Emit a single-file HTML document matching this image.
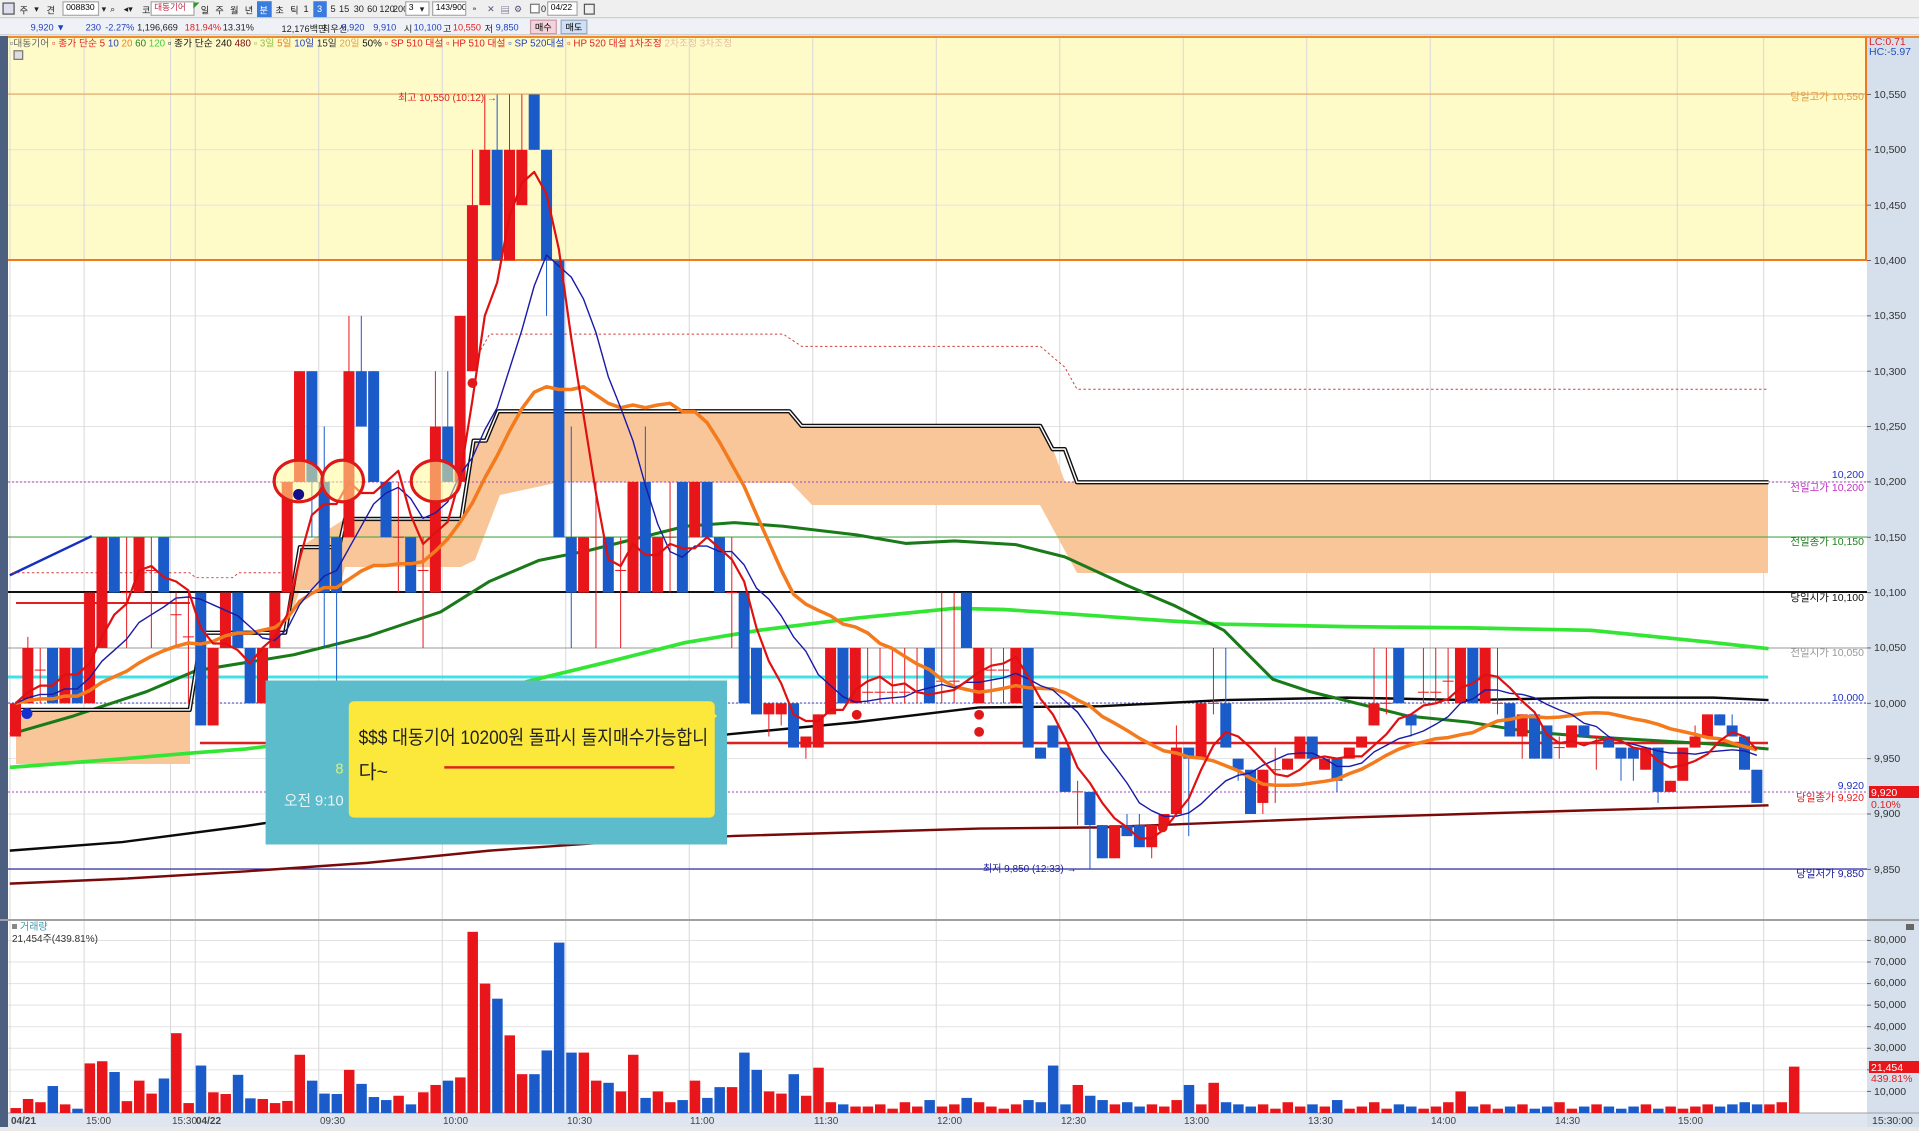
<!DOCTYPE html>
<html><head><meta charset="utf-8">
<style>
*{margin:0;padding:0;box-sizing:border-box}
body{width:1919px;height:1131px;overflow:hidden;background:#fff;font-family:"Liberation Sans","Noto Sans CJK KR",sans-serif;position:relative}
#ov{position:absolute;left:0;top:0;width:1568px;height:924px;transform:scale(1.2239);transform-origin:0 0;pointer-events:none}
.a{position:absolute;white-space:nowrap;line-height:1}
.r1{position:absolute;left:0;top:0;width:1568px;height:15px;background:#efefef;border-bottom:1px solid #ccc}
.r2{position:absolute;left:0;top:15px;width:1568px;height:14px;background:#eef2f7;border-bottom:1px solid #c8c8c8}
.bx{position:absolute;background:#fff;border:1px solid #a8a8a8;height:12px;top:1px;font-size:7px;line-height:10px;padding-left:2px;white-space:nowrap;overflow:hidden}
.t{position:absolute;top:3px;font-size:7.5px;color:#222;white-space:nowrap}
.t2{position:absolute;top:18px;font-size:7.5px;white-space:nowrap}
svg{position:absolute;left:0;top:0}
</style></head><body>
<svg id="s" width="1919" height="1131" viewBox="0 0 1919 1131">
<rect x="0" y="36" width="1919" height="1095" fill="#fff"/>
<rect x="0" y="36" width="8" height="1095" fill="#4d5f80"/>
<rect x="8" y="37" width="1858" height="223" fill="#fffbc8"/>
<rect x="1867" y="36" width="52" height="1095" fill="#d6e0ec"/>
<g id="grid"></g>
<line x1="8" y1="37" x2="1919" y2="37" stroke="#f08a2a" stroke-width="2"/>
<line x1="8" y1="94" x2="1866" y2="94" stroke="#f0a030" stroke-width="1"/>
<line x1="8" y1="260" x2="1867" y2="260" stroke="#f07820" stroke-width="2"/>
<line x1="1866" y1="37" x2="1866" y2="260" stroke="#f07820" stroke-width="2"/>
<polygon fill="#f9c699" points="16,710 190,710 190,764 16,764"/>
<polygon fill="#f9c699" points="240,631 285,631 300,547 345,519 461,519 473,440 486,440 498,411 790,411 802,426 1040,426 1053,449 1065,482 1768,482 1768,573 1077,573 1040,505 812,505 791,483 560,482 500,495 475,560 461,567 345,567 339,590 300,590 285,633 240,635"/>
<line x1="8" y1="482" x2="1867" y2="482" stroke="#a040c0" stroke-width="1" stroke-dasharray="2,2"/>
<line x1="8" y1="537" x2="1867" y2="537" stroke="#40a040" stroke-width="1"/>
<line x1="8" y1="592" x2="1867" y2="592" stroke="#111" stroke-width="2"/>
<line x1="8" y1="648" x2="1867" y2="648" stroke="#9a9a9a" stroke-width="1"/>
<line x1="8" y1="677" x2="1768" y2="677" stroke="#40e0e8" stroke-width="3"/>
<line x1="8" y1="703" x2="1867" y2="703" stroke="#4040c0" stroke-width="1" stroke-dasharray="2,2"/>
<line x1="16" y1="603" x2="190" y2="603" stroke="#e02020" stroke-width="2"/>
<line x1="200" y1="743" x2="1768" y2="743" stroke="#e02020" stroke-width="2.5"/>
<line x1="8" y1="792" x2="1867" y2="792" stroke="#a040c0" stroke-width="1" stroke-dasharray="2,2"/>
<line x1="8" y1="869" x2="1867" y2="869" stroke="#3030a0" stroke-width="1.2"/>
<line x1="0" y1="920" x2="1919" y2="920" stroke="#a0a0a0" stroke-width="2"/>
<rect x="8" y="1113" width="1859" height="14" fill="#dfe6ef"/>
<line x1="8" y1="1113" x2="1919" y2="1113" stroke="#a0a0a0"/>
<rect x="0" y="1127" width="1919" height="4" fill="#e8e8e8"/>
<g transform="scale(1.2239)" fill="none" stroke-linejoin="round">
<polyline stroke="#0a0a0a" stroke-width="2" points="8,695 100,688 200,675 300,660 400,640 500,618 595,600 700,590 800,578 900,577 1000,572 1100,570 1200,572 1300,570 1400,570 1445,572"/>
<polyline stroke="#7a0a0a" stroke-width="2" points="8,722 100,718 200,712 300,705 400,695 500,688 600,683 700,680 800,677 900,676 1000,672 1100,668 1200,665 1300,662 1445,658"/>
<polyline stroke="#33e633" stroke-width="3" points="8,627 100,620 160,615 200,612 300,600 380,575 430,557 500,540 560,525 620,515 700,505 780,497 820,498 880,502 950,507 1000,510 1100,512 1200,513 1300,515 1350,520 1400,525 1445,530"/>
<polyline stroke="#1a7a1a" stroke-width="2.5" points="8,600 60,585 120,565 160,548 240,535 300,520 360,500 400,475 440,458 480,450 520,440 560,430 600,427 640,430 700,437 740,444 780,442 830,445 870,455 920,478 960,495 1000,515 1040,555 1070,565 1110,575 1150,585 1200,590 1250,598 1300,602 1350,605 1400,608 1445,612"/>
<polyline stroke="#1530c0" stroke-width="2" points="8,470 75,438"/>
<polyline stroke="#d04040" stroke-width="0.8" stroke-dasharray="2,2" points="385,300 400,273 640,273 655,283 850,283 870,300 880,318 1445,318"/>
<polyline stroke="#d04040" stroke-width="0.8" stroke-dasharray="2,2" points="10,468 155,468 160,472 190,472 195,468 230,468"/>
<polyline stroke="#111" stroke-width="3.5" points="13,580 155,580 165,517 233,517 245,447 277,447 282,424 377,424 387,360 397,360 407,336 645,336 655,348 850,348 860,367 870,367 880,394 1445,394"/>
<polyline stroke="#fff" stroke-width="1.2" points="13,580 155,580 165,517 233,517 245,447 277,447 282,424 377,424 387,360 397,360 407,336 645,336 655,348 850,348 860,367 870,367 880,394 1445,394"/>
</g>
<g id="candles"></g>
<g id="ma"></g>
<g id="vol"></g>
<g transform="scale(1.2239)">
<ellipse cx="244" cy="393" rx="20" ry="17" fill="rgba(255,250,150,0.55)" stroke="#e01818" stroke-width="2.5"/>
<ellipse cx="280" cy="393" rx="17" ry="17" fill="rgba(255,250,150,0.55)" stroke="#e01818" stroke-width="2.5"/>
<ellipse cx="356" cy="393" rx="20" ry="17" fill="rgba(255,250,150,0.55)" stroke="#e01818" stroke-width="2.5"/>
<circle cx="244" cy="404" r="4.5" fill="#10108a"/>
<circle cx="22" cy="583" r="4.5" fill="#1530d0"/>
<circle cx="386" cy="313" r="4" fill="#e01818"/>
<circle cx="700" cy="584" r="4" fill="#e01818"/>
<circle cx="800" cy="584" r="4" fill="#e01818"/>
<circle cx="800" cy="598" r="4" fill="#e01818"/>
<circle cx="950" cy="676" r="4" fill="#e01818"/>
</g>
<g font-family="Liberation Sans, Noto Sans CJK KR, sans-serif" font-size="10.5">
<text x="398" y="101" fill="#e02020" font-size="10">최고 10,550 (10:12) →</text>
<text x="983" y="872" fill="#2020a0" font-size="10">최저 9,850 (12:33) →</text>
<g text-anchor="end">
<text x="1864" y="100" fill="#e0a040">당일고가 10,550</text>
<text x="1864" y="478" fill="#2030c0">10,200</text>
<text x="1864" y="491" fill="#c030c0">전일고가 10,200</text>
<text x="1864" y="545" fill="#208020">전일종가 10,150</text>
<text x="1864" y="601" fill="#111">당일시가 10,100</text>
<text x="1864" y="656" fill="#999">전일시가 10,050</text>
<text x="1864" y="701" fill="#2030c0">10,000</text>
<text x="1864" y="789" fill="#2030c0">9,920</text>
<text x="1864" y="801" fill="#e02020">당일종가 9,920</text>
<text x="1864" y="877" fill="#2020a0">당일저가 9,850</text>
</g>
<g fill="#333" font-size="10.5">
<text x="1869" y="45" fill="#e02020">LC:0.71</text>
<text x="1869" y="55" fill="#2050c0">HC:-5.97</text>
<text x="1874" y="98">10,550</text><text x="1874" y="153">10,500</text><text x="1874" y="209">10,450</text><text x="1874" y="264">10,400</text><text x="1874" y="319">10,350</text><text x="1874" y="375">10,300</text><text x="1874" y="430">10,250</text><text x="1874" y="485">10,200</text><text x="1874" y="541">10,150</text><text x="1874" y="596">10,100</text><text x="1874" y="651">10,050</text><text x="1874" y="707">10,000</text><text x="1874" y="762">9,950</text><text x="1874" y="817">9,900</text><text x="1874" y="873">9,850</text>
<rect x="1869" y="786" width="50" height="12" fill="#e8161b"/>
<text x="1871" y="796" fill="#fff">9,920</text>
<text x="1871" y="808" fill="#e02020">0.10%</text>
<text x="1874" y="943">80,000</text><text x="1874" y="965">70,000</text><text x="1874" y="986">60,000</text><text x="1874" y="1008">50,000</text><text x="1874" y="1030">40,000</text><text x="1874" y="1051">30,000</text><text x="1874" y="1095">10,000</text>
<rect x="1869" y="1061" width="50" height="12" fill="#e8161b"/>
<text x="1871" y="1071" fill="#fff">21,454</text>
<text x="1871" y="1082" fill="#e02020">439.81%</text>
<text x="1872" y="1124">15:30:00</text>
</g>
<g font-size="10" fill="#444">
<text x="11" y="1124" font-weight="bold">04/21</text><text x="86" y="1124">15:00</text><text x="172" y="1124">15:30</text><text x="196" y="1124" font-weight="bold">04/22</text><text x="320" y="1124">09:30</text><text x="443" y="1124">10:00</text><text x="567" y="1124">10:30</text><text x="690" y="1124">11:00</text><text x="814" y="1124">11:30</text><text x="937" y="1124">12:00</text><text x="1061" y="1124">12:30</text><text x="1184" y="1124">13:00</text><text x="1308" y="1124">13:30</text><text x="1431" y="1124">14:00</text><text x="1555" y="1124">14:30</text><text x="1678" y="1124">15:00</text>
</g>
<rect x="12" y="924" width="5" height="5" fill="#888"/>
<text x="20" y="930" fill="#3a9ab0" font-size="10">거래량</text>
<text x="12" y="942" fill="#333" font-size="10">21,454주(439.81%)</text>
<rect x="1906" y="924" width="8" height="6" fill="#666"/>
</g>
</svg>
<div id="ov">
<div class="r1"></div>
<div class="r2"></div>
<div class="a" style="left:2px;top:2px;width:10px;height:10px;border:1px solid #555;background:#dde"></div>
<div class="t" style="left:16px">주</div><div class="t" style="left:28px">▾</div>
<div class="t" style="left:38px">견</div>
<div class="bx" style="left:51px;width:30px">008830</div>
<div class="t" style="left:83px">▾</div><div class="t" style="left:90px">⌕</div><div class="t" style="left:101px">◂▾</div>
<div class="t" style="left:116px">코</div>
<div class="bx" style="left:123px;width:36px;color:#c02040">대동기어</div>
<div class="a" style="left:158px;top:2px;width:0;height:0;border-left:5px solid #2a9a2a;border-bottom:5px solid transparent"></div>
<div class="t" style="left:164px">일</div><div class="t" style="left:176px">주</div><div class="t" style="left:188px">월</div><div class="t" style="left:200px">년</div>
<div class="a" style="left:210px;top:1px;width:12px;height:13px;background:#3a7be0"></div><div class="t" style="left:212px;color:#fff">분</div>
<div class="t" style="left:225px">초</div><div class="t" style="left:237px">틱</div>
<div class="t" style="left:248px">1</div>
<div class="a" style="left:256px;top:1px;width:11px;height:13px;background:#3a7be0"></div><div class="t" style="left:259px;color:#fff">3</div>
<div class="t" style="left:270px">5</div><div class="t" style="left:277px">15</div><div class="t" style="left:289px">30</div><div class="t" style="left:300px">60</div><div class="t" style="left:310px">120</div><div class="t" style="left:321px">200</div>
<div class="bx" style="left:331px;width:20px">3</div><div class="t" style="left:343px">▾</div>
<div class="bx" style="left:353px;width:28px">143/900</div>
<div class="t" style="left:386px;color:#557">⁍</div><div class="t" style="left:398px;color:#557">✕</div><div class="t" style="left:409px;color:#557">▤</div><div class="t" style="left:420px;color:#557">⚙</div>
<div class="a" style="left:433px;top:3px;width:8px;height:8px;border:1px solid #777;background:#fff"></div><div class="t" style="left:442px">0</div>
<div class="bx" style="left:447px;width:25px">04/22</div>
<div class="a" style="left:477px;top:3px;width:9px;height:9px;border:1px solid #555"></div>
<div class="t2" style="left:25px;color:#2040c0">9,920 ▼</div>
<div class="t2" style="left:70px;color:#2040c0">230</div><div class="t2" style="left:86px;color:#2040c0">-2.27%</div>
<div class="t2" style="left:112px;color:#222">1,196,669</div>
<div class="t2" style="left:151px;color:#e02020">181.94%</div><div class="t2" style="left:182px;color:#222">13.31%</div>
<div class="t2" style="left:230px;color:#222">12,176백만</div><div class="t2" style="left:263px;color:#222">최우선</div>
<div class="t2" style="left:279px;color:#2040c0">9,920</div><div class="t2" style="left:305px;color:#2040c0">9,910</div>
<div class="t2" style="left:330px;color:#222">시</div><div class="t2" style="left:338px;color:#2040c0">10,100</div>
<div class="t2" style="left:362px;color:#222">고</div><div class="t2" style="left:370px;color:#e02020">10,550</div>
<div class="t2" style="left:396px;color:#222">저</div><div class="t2" style="left:405px;color:#2040c0">9,850</div>
<div class="a" style="left:433px;top:16px;width:22px;height:12px;background:#f4d4dc;border:1px solid #c9a;font-size:7.5px;padding:2px 0 0 3px">매수</div>
<div class="a" style="left:458px;top:16px;width:22px;height:12px;background:#cfe0f6;border:1px solid #9ab;font-size:7.5px;padding:2px 0 0 3px">매도</div>
<div class="a" style="left:8px;top:32px;font-size:8px;color:#666">▫대동기어 <span style="color:#e02020">▫ 종가 단순 5</span> <span style="color:#2040c0">10</span> <span style="color:#f08020">20</span> <span style="color:#208020">60</span> <span style="color:#40d040">120</span> <span style="color:#111">▫ 종가 단순 240</span> <span style="color:#7a0a0a">480</span> <span style="color:#90c040">▫ 3일</span> <span style="color:#e08020">5일</span> <span style="color:#2040c0">10일</span> <span style="color:#333">15일</span> <span style="color:#e0a040">20일</span> <span style="color:#111">50%</span> <span style="color:#e02020">▫ SP 510 대설 ▫ HP 510 대설</span> <span style="color:#2040c0">▫ SP 520대설</span> <span style="color:#e02020">▫ HP 520 대설 1차조정</span> <span style="color:#e0c0a0">2차조정 3차조정</span></div>
<div class="a" style="left:11px;top:41px;width:8px;height:8px;border:1px solid #777;background:#ddd"></div>
<div class="a" style="left:217px;top:556px;width:377px;height:134px;background:#5cbccb"></div>
<div class="a" style="left:285px;top:573px;width:299px;height:95px;background:#fbe83a;border-radius:4px"></div>
<div class="a" style="left:580px;top:580px;width:0;height:0;border-left:6px solid #fbe83a;border-top:5px solid transparent;border-bottom:5px solid transparent"></div>
<div class="a" style="left:293px;top:596px;font-size:16px;color:#222;transform:scaleX(0.88);transform-origin:0 0">$$$ 대동기어 10200원 돌파시 돌지매수가능합니</div>
<div class="a" style="left:293px;top:624px;font-size:16px;color:#222">다~</div>
<div class="a" style="left:363px;top:626px;width:188px;height:2px;background:#e02020"></div>
<div class="a" style="left:274px;top:622px;font-size:12px;color:#d8f080">8</div>
<div class="a" style="left:232px;top:648px;font-size:12px;color:#e8f4f6">오전 9:10</div>
</div>
<script>
var NS="http://www.w3.org/2000/svg";
function el(p,t,a){var e=document.createElementNS(NS,t);for(var k in a)e.setAttribute(k,a[k]);p.appendChild(e);return e;}
function Y(p){return 703.3-(p-10000)*1.107;}
function X(i){return 10+i*12.35;}
var g=document.getElementById('grid');
for(var p=9850;p<=10550;p+=50){el(g,'line',{x1:8,x2:1867,y1:Y(p),y2:Y(p),stroke:'#e2e2e2','stroke-width':1});el(g,'line',{x1:1867,x2:1871,y1:Y(p),y2:Y(p),stroke:'#666'});}
for(var v=10;v<=80;v+=10){var y=1113-v*2.157;el(g,'line',{x1:8,x2:1867,y1:y,y2:y,stroke:'#e2e2e2'});el(g,'line',{x1:1867,x2:1871,y1:y,y2:y,stroke:'#666'});}
[0,6,13,15,25,35,45,55,65,75,85,95,105,115,125,135,142].forEach(function(i){el(g,'line',{x1:X(i),x2:X(i),y1:37,y2:1127,stroke:'#d8d8d8'});});
var D=[[9970,10000],[10000,10050,10060],[10030,10030,10050,10000],[10050,10000],[10000,10050],[10050,10000],[10000,10100],[10050,10150],[10150,10100],[10100,10100,10150,10050],
[10100,10150],[10120,10120,10150,10050],[10150,10100],[10080,10080,10100,10050],[10060,10060,10100,10000],[10100,9980],[9980,10050],[10050,10100],[10100,10050],[10050,10000],
[10000,10050],[10050,10100],[10100,10200],[10200,10300],[10300,10200,10300,10150],[10200,10100,10250,10050],[10150,10100,10150,10000],[10150,10300,10350],[10300,10250,10350],[10300,10200],
[10200,10150],[10150,10150,10200,10100],[10150,10100],[10120,10120,10150,10050],[10100,10250,10300],[10250,10200,10300],[10200,10350],[10300,10450,10500],[10450,10500,10550],[10500,10400,10550],
[10400,10500,10550],[10450,10500,10550],[10550,10500],[10500,10400,10500,10350],[10400,10150],[10150,10100,10250,10050],[10100,10150],[10150,10150,10200,10050],[10150,10100],[10120,10120,10150,10050],
[10100,10200],[10200,10100,10250],[10100,10150],[10150,10150,10200,10100],[10200,10100],[10150,10200],[10200,10150],[10150,10100],[10100,10100,10150,10050],[10100,10000],
[10050,9990],[9990,10000,10000,9970],[9990,10000,10000,9980],[10000,9960],[9960,9970,9970,9950],[9960,9990],[9990,10050],[10050,10000],[10000,10050],[10010,10010,10050,10000],
[10010,10010,10050,10000],[10010,10010,10050,10000],[10010,10010,10050,10000],[10010,10010,10050,10000],[10050,10000],[10020,10020,10100,10000],[10020,10020,10100,10000],[10100,10050],[10000,10050],[10030,10030,10050,10000],
[10030,10030,10050,10000],[10000,10050],[10050,9960],[9960,9950],[9980,9960],[9960,9920],[9920,9920,9930,9890],[9920,9890,9920,9850],[9890,9860],[9860,9890],
[9890,9880,9900,9880],[9890,9870,9900],[9870,9890,9890,9860],[9890,9900],[9900,9960,9980],[9960,9950,9960,9880],[9950,10000],[10000,10000,10050,9990],[10000,9960,10050],[9950,9940,9950,9930],
[9940,9900],[9910,9940,9940,9900],[9940,9940,9960,9910],[9940,9950],[9950,9970],[9970,9950],[9940,9950],[9950,9930,9950,9920],[9950,9960],[9960,9970],
[9980,10000,10050],[10000,10000,10050,9990],[10050,10000],[9990,9980,9990,9970],[10010,10010,10050,10000],[10010,10010,10050,10000],[10020,10020,10050,10000],[10000,10050],[10050,10000],[10000,10050],
[10000,10000,10050,9990],[10000,9970],[9970,9990,9990,9950],[9990,9950],[9980,9950,9980,9950],[9960,9960,9970,9950],[9960,9980],[9980,9970],[9970,9970,9970,9940],[9970,9960],
[9960,9950,9960,9930],[9960,9950,9960,9930],[9940,9960],[9960,9920,9960,9910],[9920,9930],[9930,9960],[9960,9970,9980],[9970,9990],[9990,9980],[9980,9970,9990],
[9970,9940],[9940,9910]];
var RED='#e8161b',BLUE='#1a5bc9';
var cg=document.getElementById('candles');
D.forEach(function(d,i){var o=d[0],c=d[1],h=d[2]||Math.max(o,c),l=d[3]||Math.min(o,c);h=Math.max(h,o,c);l=Math.min(l,o,c);
var col=c>=o?RED:BLUE;var x=X(i),cx=x+5.5;
el(cg,'line',{x1:cx,x2:cx,y1:Y(h),y2:Y(l),stroke:col,'stroke-width':1});
if(o==c){el(cg,'line',{x1:x,x2:x+11,y1:Y(o),y2:Y(o),stroke:col,'stroke-width':1});}
else el(cg,'rect',{x:x,y:Y(Math.max(o,c)),width:11,height:Math.abs(Y(o)-Y(c)),fill:col});
d.col=col;});
var V=[2.3,6.5,5,12.5,4,2,23,24,19,5.5,15,9,16,37,4.6,22,9.6,8.8,17.7,6.8,6.5,4.6,5.6,27,15,9,8.8,20,13.5,7.4,6,8,4,9.6,13,15,16.5,84,60,53,
36,18,18,29,79,28,28,15,14,10,27,7,10,5,6,15,7,12,12,28,20,10,9,18,8,21,5,4,3,3,4,2,5,3,6,3,4,7,5,3,2,4,6,5,22,4,13,8,6,4,5,3,4,3,6,13,4,14,5,4,
3,4,2,5,3,4,3,6,2,3,5,2,4,3,2,3,5,10,3,4,2,3,4,2,3,5,2,3,4,3,2,3,4,2,3,2,3,4,3,4,5,4,4,5,21.5];
var vg=document.getElementById('vol');
V.forEach(function(v,i){var col=i<D.length?D[i].col:RED;var h=v*2.157;el(vg,'rect',{x:X(i)+0.5,y:1113-h,width:10.5,height:h,fill:col});});
var C=D.map(function(d){return d[1];});
function ma(n){var pts=[];for(var i=0;i<C.length;i++){var s=0;for(var k=0;k<n;k++){s+=C[Math.max(0,i-k)];}pts.push(X(i)+5.5+','+Y(s/n).toFixed(1));}return pts.join(' ');}
var mg=document.getElementById('ma');
el(mg,'polyline',{points:ma(20),fill:'none',stroke:'#f47a1e','stroke-width':3.5,'stroke-linejoin':'round'});
el(mg,'polyline',{points:ma(10),fill:'none',stroke:'#1a1aa8','stroke-width':1.4,'stroke-linejoin':'round'});
el(mg,'polyline',{points:ma(5),fill:'none',stroke:'#e01010','stroke-width':2.2,'stroke-linejoin':'round'});
</script>
</body></html>
